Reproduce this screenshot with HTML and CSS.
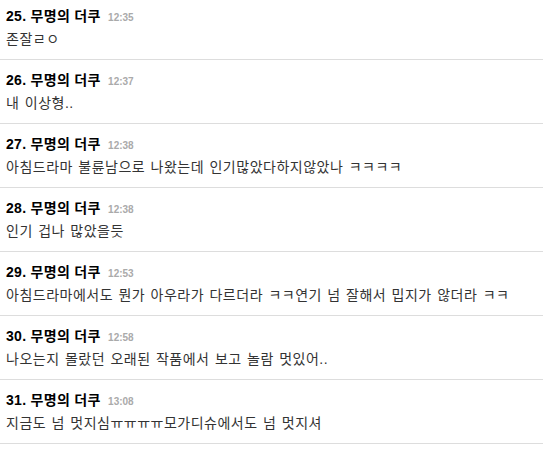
FILE: index.html
```html
<!DOCTYPE html>
<html>
<head>
    <title>댓글</title>
    <link rel="stylesheet" href="styles.css">
</head>
<body>
    <ul class="comments">
        <li class="comment">
            <div class="head"><span class="name">25. 무명의 더쿠</span> <span class="time">12:35</span></div>
            <div class="text">존잘ㄹㅇ</div>
        </li>
        <li class="comment">
            <div class="head"><span class="name">26. 무명의 더쿠</span> <span class="time">12:37</span></div>
            <div class="text">내 이상형..</div>
        </li>
        <li class="comment">
            <div class="head"><span class="name">27. 무명의 더쿠</span> <span class="time">12:38</span></div>
            <div class="text">아침드라마 불륜남으로 나왔는데 인기많았다하지않았나 ㅋㅋㅋㅋ</div>
        </li>
        <li class="comment">
            <div class="head"><span class="name">28. 무명의 더쿠</span> <span class="time">12:38</span></div>
            <div class="text">인기 겁나 많았을듯</div>
        </li>
        <li class="comment">
            <div class="head"><span class="name">29. 무명의 더쿠</span> <span class="time">12:53</span></div>
            <div class="text">아침드라마에서도 뭔가 아우라가 다르더라 ㅋㅋ연기 넘 잘해서 밉지가 않더라 ㅋㅋ</div>
        </li>
        <li class="comment">
            <div class="head"><span class="name">30. 무명의 더쿠</span> <span class="time">12:58</span></div>
            <div class="text">나오는지 몰랐던 오래된 작품에서 보고 놀람 멋있어..</div>
        </li>
        <li class="comment">
            <div class="head"><span class="name">31. 무명의 더쿠</span> <span class="time">13:08</span></div>
            <div class="text">지금도 넘 멋지심ㅠㅠㅠㅠ모가디슈에서도 넘 멋지셔</div>
        </li>
    </ul>
</body>
</html>
```

FILE: styles.css
```css
body {
    margin: 0;
    background-color: #fff;
    font-family: "Liberation Sans", "Noto Sans CJK KR", sans-serif;
}

/* list is scrolled a little, first row is cut at the top */
.comments {
    list-style: none;
    margin: -4px 0 0;
    padding: 0;
}

.comment {
    padding: 10px 6px 10px;
    border-bottom: 1px solid #ddd;
}

.head {
    height: 20px;
    line-height: 20px;
}

.name {
    font-size: 14px;
    font-weight: bold;
    letter-spacing: 0.3px;
    color: #000;
}

.time {
    font-size: 10px;
    font-weight: bold;
    color: #aaa;
    margin-left: 3px;
}

.text {
    margin-top: 3px;
    height: 20px;
    font-size: 14px;
    line-height: 20px;
    letter-spacing: 0.5px;
    word-spacing: 1px;
    color: #333;
}
```
